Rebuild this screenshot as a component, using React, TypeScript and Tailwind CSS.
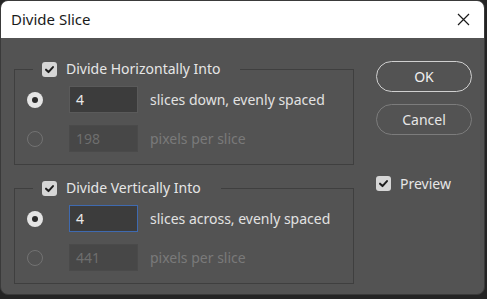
import React from 'react';

const font = { fontFamily: '"Noto Sans", "Open Sans", sans-serif' };

const CheckBox: React.FC = () => (
  <span className="flex h-[15px] w-[15px] shrink-0 items-center justify-center rounded-[3px] bg-[#d6d6d6]">
    <svg width="11" height="11" viewBox="0 0 12 12" fill="none">
      <path d="M2.2 6.2 L4.9 8.8 L9.8 3.4" stroke="#1e1e1e" strokeWidth="2.2" strokeLinecap="round" strokeLinejoin="round" />
    </svg>
  </span>
);

const Radio: React.FC<{ checked?: boolean }> = ({ checked }) =>
  checked ? (
    <span className="flex h-[16px] w-[16px] shrink-0 items-center justify-center rounded-full bg-[#e4e4e4]">
      <span className="h-[6px] w-[6px] rounded-full bg-[#2a2a2a]" />
    </span>
  ) : (
    <span className="h-[16px] w-[16px] shrink-0 rounded-full border-[1.5px] border-[#727272]" />
  );

interface RowProps {
  checked?: boolean;
  value: string;
  label: string;
  focused?: boolean;
}

const Row: React.FC<RowProps> = ({ checked, value, label, focused }) => (
  <div className="flex h-[27px] items-center">
    <div className="flex w-[16px] justify-center">
      <Radio checked={checked} />
    </div>
    <div
      className={`ml-[26px] flex h-[27px] w-[69px] items-center px-[6px] text-[14px] ${
        checked
          ? focused
            ? 'border border-[#3f6ab0] bg-[#3c3c3c] text-[#e8e8e8]'
            : 'border border-[#5a5a5a] bg-[#3c3c3c] text-[#e8e8e8]'
          : 'border border-[#4a4a4a] bg-[#474747] text-[#6e6e6e]'
      }`}
    >
      {value}
    </div>
    <span className={`ml-[12px] text-[14px] ${checked ? 'text-[#e2e2e2]' : 'text-[#7a7a7a]'}`}>{label}</span>
  </div>
);

const Group: React.FC<{ title: string; rows: RowProps[]; className?: string }> = ({ title, rows, className }) => (
  <fieldset className={`w-[340px] border border-[#3f3f3f] pb-[12px] pl-[12px] ${className ?? ''}`}>
    <legend className="ml-[6px] flex items-center gap-[9px] pl-[9px] pr-[20px] text-[14px] leading-[20px] text-[#e6e6e6]">
      <CheckBox />
      <span>{title}</span>
    </legend>
    <div className="mt-[7px] flex flex-col gap-[12px]">
      {rows.map((r, i) => (
        <Row key={i} {...r} />
      ))}
    </div>
  </fieldset>
);

export default function App() {
  return (
    <div className="h-[299px] w-[487px] bg-[#242424]" style={font}>
      <div className="flex h-[295px] w-[485px] flex-col overflow-hidden rounded-[8px] border border-[#3a3a3a] bg-[#535353]">
        <div className="flex h-[37px] shrink-0 items-center justify-between bg-white pl-[10px] pr-[14px]">
          <span className="text-[15px] text-[#1a1a1a]">Divide Slice</span>
          <svg width="13" height="13" viewBox="0 0 13 13">
            <path d="M1 1 L12 12 M12 1 L1 12" stroke="#1a1a1a" strokeWidth="1.2" />
          </svg>
        </div>
        <div className="flex pl-[13px] pt-[21px]">
          <div className="flex flex-col gap-[13px]">
            <Group
              title="Divide Horizontally Into"
              rows={[
                { checked: true, value: '4', label: 'slices down, evenly spaced' },
                { value: '198', label: 'pixels per slice' },
              ]}
            />
            <Group
              title="Divide Vertically Into"
              rows={[
                { checked: true, value: '4', label: 'slices across, evenly spaced', focused: true },
                { value: '441', label: 'pixels per slice' },
              ]}
            />
          </div>
          <div className="ml-[22px] flex flex-col pt-[2px]">
            <button className="h-[31px] w-[96px] rounded-full border-[1.5px] border-[#d0d0d0] text-[14px] text-[#f0f0f0]">
              OK
            </button>
            <button className="mt-[12px] h-[31px] w-[96px] rounded-full border border-[#7c7c7c] text-[14px] text-[#e6e6e6]">
              Cancel
            </button>
            <label className="mt-[38px] flex items-center gap-[9px] text-[14px] text-[#e6e6e6]">
              <CheckBox />
              <span>Preview</span>
            </label>
          </div>
        </div>
      </div>
    </div>
  );
}
